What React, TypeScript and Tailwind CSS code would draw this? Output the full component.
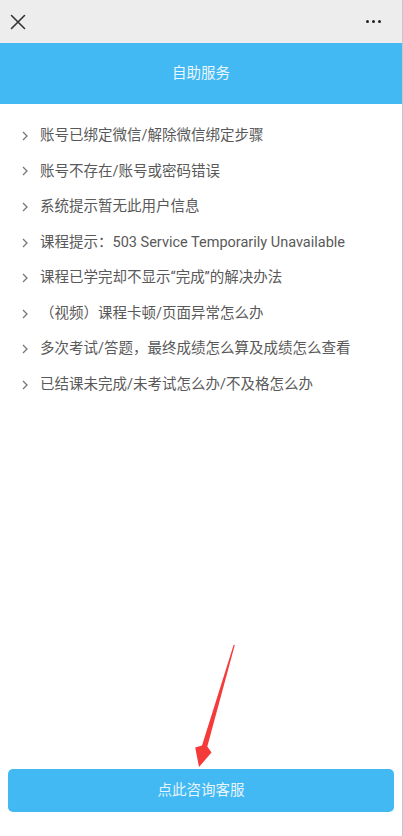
import React from 'react';

const items = [
  '账号已绑定微信/解除微信绑定步骤',
  '账号不存在/账号或密码错误',
  '系统提示暂无此用户信息',
  '课程提示：503 Service Temporarily Unavailable',
  '课程已学完却不显示“完成”的解决办法',
  '（视频）课程卡顿/页面异常怎么办',
  '多次考试/答题，最终成绩怎么算及成绩怎么查看',
  '已结课未完成/未考试怎么办/不及格怎么办',
];

export default function App() {
  return (
    <div
      className="relative flex h-[836px] w-[403px] flex-col overflow-hidden border-r border-[#c8c8c8] bg-white"
      style={{ fontFamily: 'Roboto, "Noto Sans CJK SC", sans-serif' }}
    >
      {/* Top bar */}
      <div className="flex h-[43px] items-center justify-between bg-[#ededed] pl-[10px] pr-[21px]">
        <svg width="16" height="16" viewBox="0 0 16 16" className="text-[#333]">
          <path d="M1.5 1.5 L14.5 14.5 M14.5 1.5 L1.5 14.5" stroke="currentColor" strokeWidth="1.6" strokeLinecap="round" />
        </svg>
        <div className="flex items-center gap-[2.5px]">
          <span className="h-[3.5px] w-[3.5px] rounded-full bg-[#222]" />
          <span className="h-[3.5px] w-[3.5px] rounded-full bg-[#222]" />
          <span className="h-[3.5px] w-[3.5px] rounded-full bg-[#222]" />
        </div>
      </div>

      {/* Title */}
      <div className="flex h-[61px] items-center justify-center bg-[#42b9f3] text-[14.5px] text-[#eaf6fd]">
        自助服务
      </div>

      {/* List */}
      <ul className="flex-1 pt-[14px]">
        {items.map((t) => (
          <li key={t} className="flex h-[35.6px] items-center text-[14.5px] text-[#595959]">
            <svg width="8" height="10" viewBox="0 0 8 10" className="ml-[21px] mr-[11px] shrink-0">
              <path d="M2 1 L6 5 L2 9" fill="none" stroke="#777" strokeWidth="1.3" />
            </svg>
            <span className="whitespace-nowrap">{t}</span>
          </li>
        ))}
      </ul>

      {/* Bottom button */}
      <div className="px-[8px] pb-[24px]">
        <button className="flex h-[43px] w-full items-center justify-center rounded-[5px] bg-[#42b9f3] text-[14.5px] text-[#e6f4fc]">
          点此咨询客服
        </button>
      </div>

      {/* Red arrow annotation */}
      <svg className="pointer-events-none absolute left-0 top-0" width="403" height="836" viewBox="0 0 403 836">
        <polygon
          points="234.8,645 207.3,746.5 211.5,752.5 199,767 195.2,747.5 202,745.5 233.6,645"
          fill="#f53a3a"
        />
      </svg>
    </div>
  );
}
